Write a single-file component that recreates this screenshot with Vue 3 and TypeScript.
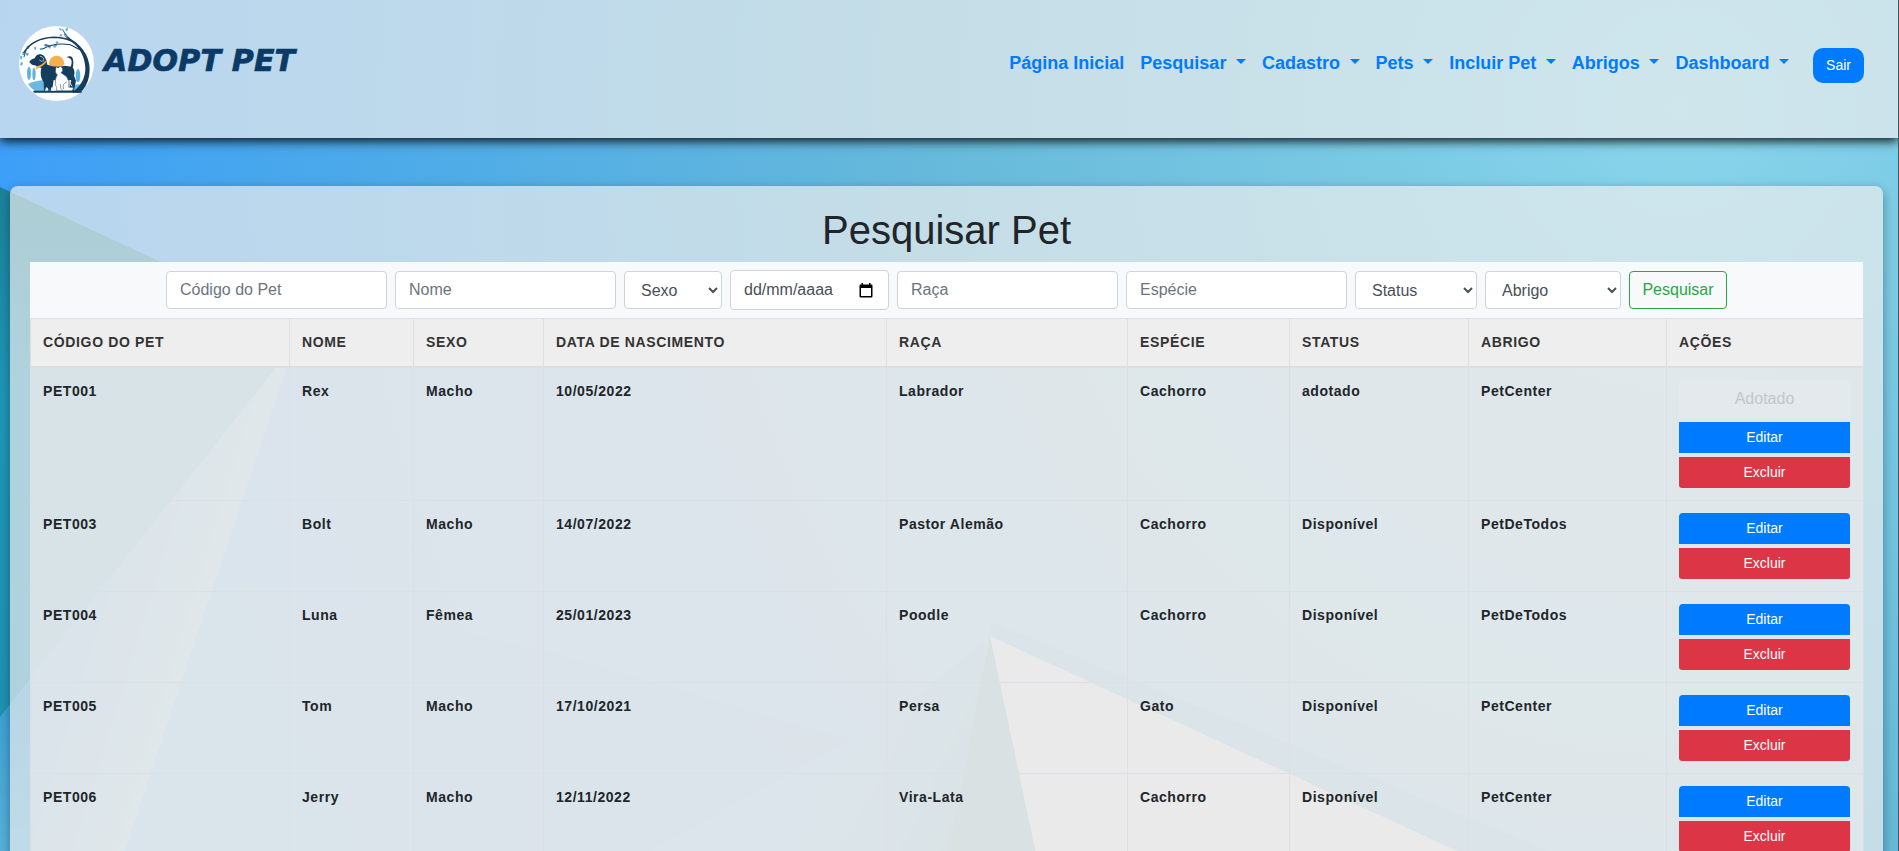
<script setup lang="ts">
interface Pet {
  code: string
  name: string
  sex: string
  birth: string
  breed: string
  species: string
  status: string
  shelter: string
  adopted?: boolean
}

const links: { label: string; menu: boolean }[] = [
  { label: 'Página Inicial', menu: false },
  { label: 'Pesquisar', menu: true },
  { label: 'Cadastro', menu: true },
  { label: 'Pets', menu: true },
  { label: 'Incluir Pet', menu: true },
  { label: 'Abrigos', menu: true },
  { label: 'Dashboard', menu: true },
]

const columns: string[] = [
  'Código do Pet', 'Nome', 'Sexo', 'Data de Nascimento', 'Raça',
  'Espécie', 'Status', 'Abrigo', 'Ações',
]

const pets: Pet[] = [
  { code: 'PET001', name: 'Rex', sex: 'Macho', birth: '10/05/2022', breed: 'Labrador', species: 'Cachorro', status: 'adotado', shelter: 'PetCenter', adopted: true },
  { code: 'PET003', name: 'Bolt', sex: 'Macho', birth: '14/07/2022', breed: 'Pastor Alemão', species: 'Cachorro', status: 'Disponível', shelter: 'PetDeTodos' },
  { code: 'PET004', name: 'Luna', sex: 'Fêmea', birth: '25/01/2023', breed: 'Poodle', species: 'Cachorro', status: 'Disponível', shelter: 'PetDeTodos' },
  { code: 'PET005', name: 'Tom', sex: 'Macho', birth: '17/10/2021', breed: 'Persa', species: 'Gato', status: 'Disponível', shelter: 'PetCenter' },
  { code: 'PET006', name: 'Jerry', sex: 'Macho', birth: '12/11/2022', breed: 'Vira-Lata', species: 'Cachorro', status: 'Disponível', shelter: 'PetCenter' },
]
</script>

<template>
  <div class="page">
    <svg class="backdrop" viewBox="0 0 1899 851" preserveAspectRatio="none" aria-hidden="true">
      <defs>
        <radialGradient id="sky" gradientUnits="userSpaceOnUse" cx="1680" cy="110" r="1680">
          <stop offset="0" stop-color="#88d5eb" />
          <stop offset="0.45" stop-color="#66b9da" />
          <stop offset="0.8" stop-color="#4aa9ea" />
          <stop offset="1" stop-color="#3d9ff8" />
        </radialGradient>
        <linearGradient id="teal" x1="0" y1="0" x2="0" y2="1">
          <stop offset="0" stop-color="#1c829c" />
          <stop offset="0.4" stop-color="#1f98b9" />
          <stop offset="1" stop-color="#1f93b5" />
        </linearGradient>
        <linearGradient id="ray" gradientUnits="userSpaceOnUse" x1="100" y1="560" x2="230" y2="600">
          <stop offset="0" stop-color="#49a5dc" />
          <stop offset="1" stop-color="#7cc6d4" />
        </linearGradient>
        <linearGradient id="low" gradientUnits="userSpaceOnUse" x1="0" y1="700" x2="0" y2="851">
          <stop offset="0" stop-color="#3ca2d3" />
          <stop offset="1" stop-color="#58b2de" />
        </linearGradient>
        <linearGradient id="shade" gradientUnits="userSpaceOnUse" x1="800" y1="760" x2="960" y2="830">
          <stop offset="0" stop-color="#55b0c8" stop-opacity="0" />
          <stop offset="1" stop-color="#378fa8" />
        </linearGradient>
      </defs>
      <rect width="1899" height="851" fill="url(#sky)" />
      <path d="M205 575L560 655L850 740L650 851H140z" fill="#4a9bd8" opacity=".45" />
      <path d="M0 187L279 317L292 351L125 851H0z" fill="url(#ray)" />
      <path d="M0 717L32 678L30 851H0z" fill="url(#low)" />
      <path d="M0 187L279 317L290 350L0 717z" fill="url(#teal)" />
      <path d="M991 622L1310 752L1550 851H1440L990 640z" fill="#4a9cc6" opacity=".85" />
      <path d="M986 640L730 851H990z" fill="url(#shade)" />
      <path d="M990.5 636L950 851H1036z" fill="#2f8184" />
      <path d="M990.5 636L1036 851H1458z" fill="#e6e8d0" />
    </svg>

    <header class="topbar">
      <a class="brand">
        <svg class="logo" viewBox="27 18 225 225" aria-hidden="true">
          <circle cx="139.5" cy="130.5" r="112.5" fill="#fff" />
          <path d="M54 192Q78 180 112 180L124 213H76Q62 205 54 192z" fill="#69b9e3" />
          <path d="M194 196Q204 190 213 195L210 213H192z" fill="#69b9e3" />
          <g fill="#5fb2dd">
            <ellipse cx="57" cy="160" rx="6" ry="20" />
            <ellipse cx="72" cy="162" rx="5" ry="19" />
            <ellipse cx="204" cy="167" rx="7" ry="20" />
            <path d="M38 95l8 3-3 9-7-4zM50 78l8-1-2 10-6-2zM31 107l6 2-2 10-5-4zM33 126l6 2-3 9-6-3zM48 98l9 2-4 8-5-3zM72 82l6-2 0 10-5-2zM89 84l8-1 0 7-7 0zM104 72l9 1-3 8-7-3zM117 75l7 2-4 10-6-5zM134 73l8 3-7 8-6-4zM136 68l6-6 4 6-6 3zM154 33l-6-4 0-6 7 4zM166 28l6-6 2 7-6 6zM151 42l7 2-4 6-6-3zM162 40l9 1-3 7-6-2z" />
          </g>
          <g fill="none" stroke="#153e5e" stroke-linecap="round">
            <path d="M42 97Q70 54 132 52Q173 53 199 72" stroke-width="4.5" />
            <path d="M98 87Q134 66 181 74L207 88" stroke-width="3.2" />
            <path d="M158 29Q163 43 178 54M48 92L42 111M117 77L105 75" stroke-width="2.5" />
          </g>
          <path d="M162 45Q239 83 239 150Q238 187 218 211L207 218H185Q226 190 226 145Q224 89 174 58z" fill="#153e5e" />
          <path d="M117 130A23 23 0 0 1 163 130Q162 138 151 141H119z" fill="#f9af4b" />
          <g fill="#153e5e">
            <path d="M58 127Q59 119 74 115Q80 100 93 103Q108 106 112 134Q137 145 164 137L185 140Q197 147 192 167L198 182L192 213H179V180Q164 186 131 180L126 212H102L101 187Q88 168 94 143L86 142Q77 134 66 134Z" />
            <path d="M181 143Q193 114 169 112Q188 101 190 125Q191 137 186 149z" />
            <path d="M69 212H215V218H72z" />
          </g>
          <path d="M90 109Q102 110 101 121Q96 128 88 120" fill="none" stroke="#fff" stroke-width="1.8" />
          <path d="M78 142Q96 140 108 124" fill="none" stroke="#f9af4b" stroke-width="5" />
          <path d="M80 141l4 3-3 5-4-3z" fill="#f9af4b" />
          <path d="M139 140L145 144L151 138L157 144Q161 153 153 158L170 170Q180 185 176 202H188Q194 208 185 212H140Q142 202 136 194Q134 176 142 164Q132 157 139 140z" fill="#fff" stroke="#153e5e" stroke-width="1.5" />
          <path d="M151 192Q150 207 158 212M171 186Q155 191 161 207" fill="none" stroke="#153e5e" stroke-width="1.5" />
          <path d="M182 180Q178 194 187 198" fill="none" stroke="#fff" stroke-width="3" />
          <path d="M108 202Q116 203 115 212H105zM124 202Q131 201 132 212H122z" fill="#dff1fa" />
        </svg>
        <span class="brand-name">ADOPT PET</span>
      </a>
      <nav class="menu">
        <a v-for="link in links" :key="link.label" class="menu-link" :class="{ dropdown: link.menu }">{{ link.label }}</a>
        <button class="logout" type="button">Sair</button>
      </nav>
    </header>

    <main class="panel">
      <h1 class="title">Pesquisar Pet</h1>

      <form class="filters" @submit.prevent>
        <input class="field text-field" placeholder="Código do Pet">
        <input class="field text-field" placeholder="Nome">
        <select class="field sex-field"><option>Sexo</option></select>
        <div class="field date-field">
          <span>dd/mm/aaaa</span>
          <svg class="calendar" viewBox="0 0 14 15" aria-hidden="true">
            <path d="M2.5 0H4V1.5H10V0H11.5V1.5H12.5Q13.5 1.5 13.5 2.8V13.2Q13.5 14.5 12.2 14.5H1.8Q.5 14.5 .5 13.2V2.8Q.5 1.5 1.8 1.5H2.5zM2 5V13H12V5z" fill="#000" fill-rule="evenodd" />
          </svg>
        </div>
        <input class="field text-field" placeholder="Raça">
        <input class="field text-field" placeholder="Espécie">
        <select class="field status-field"><option>Status</option></select>
        <select class="field shelter-field"><option>Abrigo</option></select>
        <button class="search" type="submit">Pesquisar</button>
      </form>

      <table class="pets">
        <colgroup>
          <col class="c-code"><col class="c-name"><col class="c-sex"><col class="c-birth"><col class="c-breed">
          <col class="c-species"><col class="c-status"><col class="c-shelter"><col class="c-actions">
        </colgroup>
        <thead>
          <tr>
            <th v-for="column in columns" :key="column">{{ column }}</th>
          </tr>
        </thead>
        <tbody>
          <tr v-for="pet in pets" :key="pet.code">
            <td>{{ pet.code }}</td>
            <td>{{ pet.name }}</td>
            <td>{{ pet.sex }}</td>
            <td>{{ pet.birth }}</td>
            <td>{{ pet.breed }}</td>
            <td>{{ pet.species }}</td>
            <td>{{ pet.status }}</td>
            <td>{{ pet.shelter }}</td>
            <td class="actions-cell">
              <div class="actions">
                <button v-if="pet.adopted" class="action adopted" type="button" disabled>Adotado</button>
                <button class="action edit" type="button">Editar</button>
                <button class="action remove" type="button">Excluir</button>
              </div>
            </td>
          </tr>
        </tbody>
      </table>
    </main>
  </div>
</template>

<style>
html,
body {
  margin: 0;
  height: 100%;
  overflow: hidden;
}
</style>

<style scoped>
.page {
  position: relative;
  box-sizing: border-box;
  height: 851px;
  overflow: hidden;
  border-right: 1px solid #46565c;
  font-family: "Liberation Sans", Arial, sans-serif;
  font-size: 16px;
  line-height: 1.5;
  color: #212529;
}

.page *,
.page *::after {
  box-sizing: border-box;
}

.backdrop {
  position: absolute;
  inset: 0;
  width: 100%;
  height: 100%;
}

.topbar {
  position: relative;
  display: flex;
  justify-content: space-between;
  align-items: flex-start;
  height: 138px;
  padding: 26px 34px 0 19px;
  background: rgba(236, 237, 236, 0.7);
  box-shadow: 0 3px 10px rgba(0, 0, 0, 0.9);
}

.brand {
  display: flex;
  gap: 10px;
}

.logo {
  width: 75px;
  height: 75px;
}

.brand-name {
  margin-top: 17px;
  font: italic 900 30px/36px Verdana, "DejaVu Sans", sans-serif;
  letter-spacing: 0.2px;
  color: #0b3a66;
  -webkit-text-stroke: 0.7px #0b3a66;
  white-space: nowrap;
}

.menu {
  display: flex;
  align-items: flex-start;
  padding-top: 22px;
}

.menu-link {
  margin-top: 1px;
  padding: 1px 8px 0;
  font-size: 18px;
  font-weight: 700;
  line-height: 27px;
  color: #007bff;
  white-space: nowrap;
}

.dropdown::after {
  content: "";
  display: inline-block;
  margin-left: calc(0.255em + 5px);
  vertical-align: 0.255em;
  border-top: 0.3em solid;
  border-right: 0.3em solid transparent;
  border-left: 0.3em solid transparent;
}

.logout {
  width: 51px;
  height: 35px;
  margin-left: 16px;
  padding: 0 0 1px;
  border: 0;
  border-radius: 10px;
  background: #007bff;
  color: #fff;
  font: 14px "Liberation Sans", Arial, sans-serif;
}

.panel {
  position: relative;
  width: 1873px;
  margin: 48px 0 0 10px;
  padding: 20px 20px 60px;
  border-radius: 8px;
  background: rgba(236, 237, 236, 0.7);
  box-shadow: 0 4px 12px rgba(0, 0, 0, 0.35);
}

.title {
  margin: 0 0 8px;
  font-size: 40px;
  font-weight: 400;
  line-height: 48px;
  text-align: center;
}

.filters {
  display: flex;
  justify-content: center;
  align-items: center;
  gap: 8px;
  height: 56px;
  background: #f8f9fa;
}

.field {
  height: 38px;
  padding: 6px 12px;
  border: 1px solid #ced4da;
  border-radius: 4px;
  background: #fff;
  color: #495057;
  font: 16px/24px "Liberation Sans", Arial, sans-serif;
}

.field::placeholder {
  color: #6c757d;
  opacity: 1;
}

.text-field {
  width: 221px;
  padding-left: 13px;
}

.sex-field { width: 98px; }
.status-field { width: 122px; }
.shelter-field { width: 136px; }

.date-field {
  display: flex;
  align-items: center;
  justify-content: space-between;
  width: 159px;
  height: 40px;
  padding: 6px 15px 6px 13px;
}

.calendar {
  width: 14px;
  height: 15px;
}

.search {
  width: 98px;
  height: 38px;
  padding: 0;
  border: 1px solid #28a745;
  border-radius: 4px;
  background: transparent;
  color: #28a745;
  font: 16px/24px "Liberation Sans", Arial, sans-serif;
}

.pets {
  width: 1833px;
  table-layout: fixed;
  border-collapse: collapse;
  background: rgba(232, 234, 235, 0.7);
  font-size: 14px;
  letter-spacing: 0.55px;
  line-height: 21px;
}

.c-code { width: 259px; }
.c-name { width: 124px; }
.c-sex { width: 130px; }
.c-birth { width: 343px; }
.c-breed { width: 241px; }
.c-species { width: 162px; }
.c-status { width: 179px; }
.c-shelter { width: 198px; }
.c-actions { width: 197px; }

.pets th,
.pets td {
  padding: 13px 12px 11px;
  border: 1px solid #dce0e5;
  text-align: left;
  vertical-align: top;
  font-weight: 700;
}

.pets th {
  padding-bottom: 13px;
  border-bottom-width: 2px;
  background: #eee;
  color: #333;
  letter-spacing: 0.65px;
  text-transform: uppercase;
}

.pets .actions-cell {
  padding: 12px 13px 12px 12px;
}

.actions {
  display: flex;
  flex-direction: column;
  gap: 4px;
}

.action {
  height: 31px;
  padding: 0;
  border: 0;
  color: #fff;
  font: 14px/21px "Liberation Sans", Arial, sans-serif;
}

.action:first-child {
  border-radius: 4px 4px 0 0;
}

.action:last-child {
  border-radius: 0 0 3px 3px;
}

.edit { background: #007bff; }
.remove { background: #dc3545; }

.adopted {
  height: 38px;
  padding-bottom: 2px;
  background: rgba(238, 240, 241, 0.3);
  color: #c2c7c9;
  font-size: 16px;
}
</style>
